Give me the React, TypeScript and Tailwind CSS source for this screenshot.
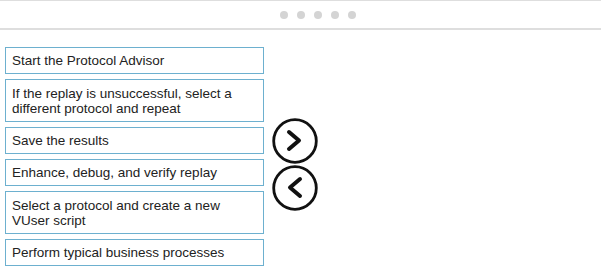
import React from "react";

const items: { text: string; tall?: boolean }[] = [
  { text: "Start the Protocol Advisor" },
  { text: "If the replay is unsuccessful, select a different protocol and repeat", tall: true },
  { text: "Save the results" },
  { text: "Enhance, debug, and verify replay" },
  { text: "Select a protocol and create a new VUser script", tall: true },
  { text: "Perform typical business processes" },
];

function CircleButton({ dir }: { dir: "right" | "left" }) {
  return (
    <svg width="46" height="46" viewBox="0 0 46 46">
      <circle cx="23" cy="23" r="21.3" fill="white" stroke="#111" strokeWidth="2.8" />
      {dir === "right" ? (
        <polyline points="17,14 27,22.5 17,31" fill="none" stroke="#111" strokeWidth="4" strokeLinecap="round" strokeLinejoin="round" />
      ) : (
        <polyline points="28,14 18,22.5 28,31" fill="none" stroke="#111" strokeWidth="4" strokeLinecap="round" strokeLinejoin="round" />
      )}
    </svg>
  );
}

export default function App() {
  return (
    <div className="w-[601px] h-[274px] bg-white overflow-hidden" style={{ fontFamily: '"Liberation Sans", Arial, sans-serif' }}>
      <div className="h-[30px] border-t border-b-2 border-[#dedede] flex items-center justify-center gap-[9px] pl-[35px]">
        {[0, 1, 2, 3, 4].map((i) => (
          <span key={i} className="w-[8px] h-[8px] rounded-full bg-[#d4d4d4]" />
        ))}
      </div>
      <div className="flex">
        <div className="ml-[5px] mt-[17px] w-[259px] flex flex-col gap-[5px]">
          {items.map((it) => (
            <div
              key={it.text}
              className={`border border-[#6db0cf] flex items-center pl-[6px] pr-[14px] text-[13.5px] leading-[15px] text-[#222] ${it.tall ? "h-[43px]" : "h-[27px]"}`}
            >
              {it.text}
            </div>
          ))}
        </div>
        <div className="ml-[8px] mt-[88px] flex flex-col gap-[1px]">
          <CircleButton dir="right" />
          <CircleButton dir="left" />
        </div>
      </div>
    </div>
  );
}
